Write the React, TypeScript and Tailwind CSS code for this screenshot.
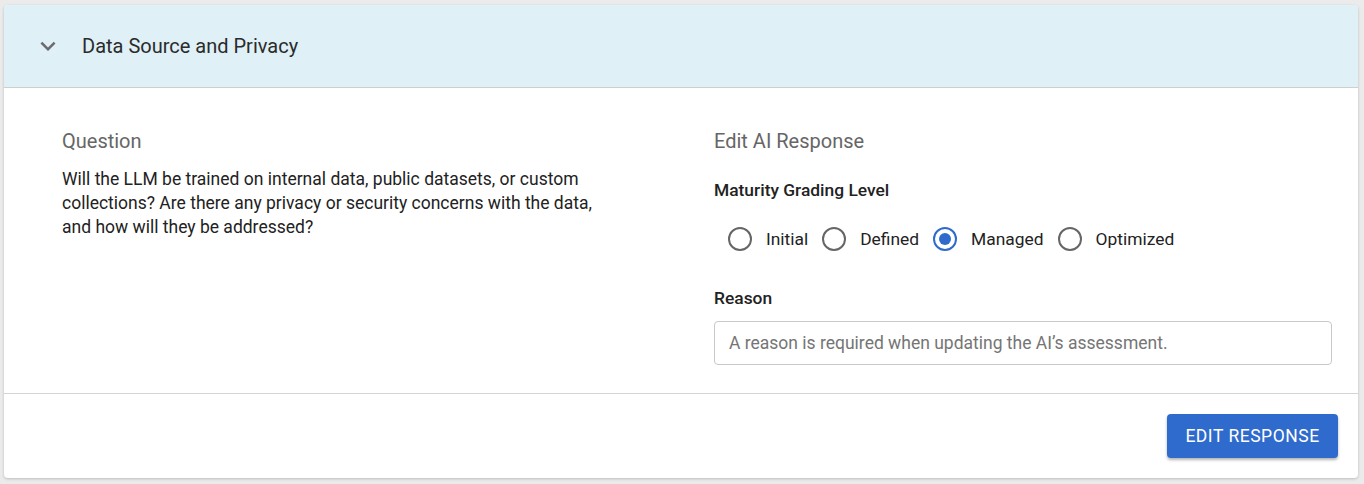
import { useState } from 'react';

const levels = ['Initial', 'Defined', 'Managed', 'Optimized'];

function ExpandIcon() {
  return (
    <svg width="30" height="30" viewBox="0 0 24 24" className="fill-[#6b6b6b]">
      <path d="M16.59 8.59 12 13.17 7.41 8.59 6 10l6 6 6-6z" />
    </svg>
  );
}

function Radio({ checked }: { checked: boolean }) {
  return (
    <span
      className={`flex h-[24px] w-[24px] items-center justify-center rounded-full border-2 ${
        checked ? 'border-[#2f6bcc]' : 'border-[#666666]'
      }`}
    >
      {checked && <span className="h-[12px] w-[12px] rounded-full bg-[#2f6bcc]" />}
    </span>
  );
}

export default function App() {
  const [level, setLevel] = useState('Managed');

  return (
    <div
      className="min-h-screen bg-[#ebebeb] pl-[4px] pt-[5px]"
      style={{ fontFamily: 'Roboto, "Noto Sans", sans-serif' }}
    >
      <div className="w-[1354px] overflow-hidden rounded-[4px] bg-white shadow-[0_1px_3px_rgba(0,0,0,0.2)]">
        {/* accordion header */}
        <div className="flex h-[83px] items-center border-b border-[#cfcfcf] bg-[#dff0f7] pl-[29px]">
          <ExpandIcon />
          <span className="ml-[19px] text-[20px] text-[#2b2b2b]">Data Source and Privacy</span>
        </div>

        {/* body */}
        <div className="grid grid-cols-2 gap-[34px] pb-[28px] pl-[58px] pr-[26px] pt-[41px]">
          <div>
            <h3 className="text-[20px] leading-[24px] text-[#666666]">Question</h3>
            <p className="mt-[14px] w-[562px] text-[17.5px] leading-[24px] text-[#222222]">
              Will the LLM be trained on internal data, public datasets, or custom collections? Are
              there any privacy or security concerns with the data, and how will they be addressed?
            </p>
          </div>

          <div>
            <h3 className="text-[20px] leading-[24px] text-[#666666]">Edit AI Response</h3>
            <div className="mt-[25px] text-[17.4px] font-medium leading-[24px] text-[#222222]">
              Maturity Grading Level
            </div>
            <div className="mt-[16px] flex h-[42px] items-center">
              {levels.map((l) => (
                <label
                  key={l}
                  onClick={() => setLevel(l)}
                  className="ml-[14px] flex cursor-pointer items-center gap-[14px] text-[17.4px] text-[#222222]"
                >
                  <Radio checked={level === l} />
                  <span>{l}</span>
                </label>
              ))}
            </div>
            <div className="mt-[26px] text-[17.4px] font-medium leading-[24px] text-[#222222]">Reason</div>
            <input
              className="mt-[11px] h-[44px] w-full rounded-[4px] border border-[#c8c8c8] px-[14px] text-[17.5px] text-[#222222] outline-none placeholder:text-[#757575]"
              placeholder="A reason is required when updating the AI’s assessment."
            />
          </div>
        </div>

        {/* footer */}
        <div className="flex justify-end border-t border-[#d4d4d4] pb-[20px] pr-[20px] pt-[20px]">
          <button className="h-[44px] w-[171px] rounded-[4px] bg-[#2f6bcc] text-[17.5px] uppercase tracking-[0.03em] text-white shadow-[0_2px_3px_rgba(0,0,0,0.3)]">
            Edit Response
          </button>
        </div>
      </div>
    </div>
  );
}
